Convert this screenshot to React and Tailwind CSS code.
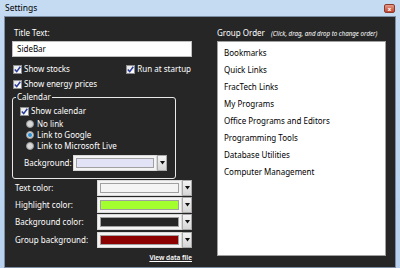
import React from "react";

function Check({ checked = true }) {
  return (
    <span className="w-[9px] h-[9px] shrink-0 border border-[#8f8f8f] bg-gradient-to-br from-[#e6e6e6] to-[#ffffff] flex items-center justify-center">
      {checked && (
        <svg width="7" height="7" viewBox="0 0 7 7">
          <path d="M0.8 3.6 L2.7 5.6 L6.3 0.8" stroke="#2a3b9c" strokeWidth="1.5" fill="none" />
        </svg>
      )}
    </span>
  );
}

function Radio({ checked = false }) {
  return (
    <span className="w-[8px] h-[8px] shrink-0 rounded-full border border-[#9a9a9a] bg-[#d8d8d8] flex items-center justify-center">
      {checked && <span className="w-[4px] h-[4px] rounded-full bg-[#2b8fd6]" />}
    </span>
  );
}

function Combo({ color, w = "w-[95px]" }) {
  return (
    <div className={`flex items-stretch h-[16px] shrink-0 ${w}`}>
      <div className="flex-1 border border-[#d9d9d9] bg-[#f4f4f4] p-[2px]">
        <div className="w-full h-full border border-[#a0a0a0]" style={{ background: color }} />
      </div>
      <div className="w-[10px] border border-[#a9a9a9] bg-gradient-to-b from-[#f4f4f4] to-[#d6d6d6] flex items-center justify-center">
        <svg width="5" height="4" viewBox="0 0 5 4">
          <path d="M0 0 L5 0 L2.5 3.5 Z" fill="#111" />
        </svg>
      </div>
    </div>
  );
}

export default function App() {
  const groups = [
    "Bookmarks",
    "Quick Links",
    "FracTech Links",
    "My Programs",
    "Office Programs and Editors",
    "Programming Tools",
    "Database Utilities",
    "Computer Management",
  ];
  const colorRows = [
    ["Text color:", "#f4f4f4"],
    ["Highlight color:", "#a4ff2e"],
    ["Background color:", "#262626"],
    ["Group background:", "#8b0000"],
  ];
  return (
    <div
      className="w-[400px] h-[268px] bg-gradient-to-b from-[#c4dbf2] to-[#b7d1ee] flex flex-col overflow-hidden text-[8px] text-white whitespace-nowrap"
      style={{ fontFamily: '"Noto Sans", "Open Sans", sans-serif' }}
    >
      <div className="h-[16px] flex items-center justify-between pl-[5px] pr-[5px] shrink-0">
        <span className="text-black text-[8.5px] leading-none">Settings</span>
        <div className="w-[11px] h-[9px] mt-[1px] rounded-[2px] bg-gradient-to-b from-[#e59a8a] to-[#c0452f] border border-[#8d3a2c] flex items-center justify-center text-white text-[6px] font-bold leading-none">
          x
        </div>
      </div>
      <div className="mx-[4px] mb-[4px] flex-1 border border-[#7b8ea3] bg-[#262626] flex px-[7px] pt-[10px] pb-[4px]">
        <div className="w-[180px] flex flex-col">
          <div className="leading-none h-[14px] pl-[2px] pt-[2px]">Title Text:</div>
          <div className="h-[16px] bg-white border border-[#bfbfbf] text-black flex items-center px-[4px] mt-[0px]">SideBar</div>
          <div className="flex justify-between mt-[6px] h-[12px] items-center pl-[1px]">
            <div className="flex items-center gap-[2px]">
              <Check />
              <span>Show stocks</span>
            </div>
            <div className="flex items-center gap-[2px] pr-[1px]">
              <Check />
              <span>Run at startup</span>
            </div>
          </div>
          <div className="flex items-center gap-[2px] mt-[3px] h-[12px] pl-[1px]">
            <Check />
            <span>Show energy prices</span>
          </div>
          <div className="relative mt-[7px] w-[164px] h-[82px] border border-[#e8e8e8] rounded-[3px] pt-[7px] pl-[7px]">
            <span className="absolute left-[3px] top-[-7px] bg-[#262626] px-[1px] leading-[12px]">Calendar</span>
            <div className="flex items-center gap-[2px] h-[12px]">
              <Check />
              <span>Show calendar</span>
            </div>
            <div className="flex flex-col pl-[6px] mt-[1px]">
              <div className="flex items-center gap-[3px] h-[11px]">
                <Radio />
                <span>No link</span>
              </div>
              <div className="flex items-center gap-[3px] h-[11px]">
                <Radio checked />
                <span>Link to Google</span>
              </div>
              <div className="flex items-center gap-[3px] h-[11px]">
                <Radio />
                <span>Link to Microsoft Live</span>
              </div>
            </div>
            <div className="flex items-center mt-[4px] pl-[4px]">
              <span className="w-[49px]">Background:</span>
              <Combo color="#e2e3f7" w="w-[94px]" />
            </div>
          </div>
          <div className="flex flex-col mt-[0px]">
            {colorRows.map(([label, c]) => (
              <div key={label} className="flex items-center justify-between h-[17.3px] pl-[3px]">
                <span>{label}</span>
                <Combo color={c} />
              </div>
            ))}
          </div>
          <div className="flex justify-end mt-[5px]">
            <span className="underline text-[6.5px] font-semibold">View data file</span>
          </div>
        </div>
        <div className="flex-1 flex flex-col pl-[25px]">
          <div className="flex items-baseline h-[14px] leading-none pt-[2px]">
            <span>Group Order</span>
            <span className="italic text-[6.2px] ml-[6px]">(Click, drag, and drop to change order)</span>
          </div>
          <div className="w-[169px] h-[215px] bg-white border border-[#a0a0a0] text-black flex flex-col pt-[2px] pl-[6px]">
            {groups.map((g) => (
              <div key={g} className="h-[17px] flex items-center">
                {g}
              </div>
            ))}
          </div>
        </div>
      </div>
    </div>
  );
}
